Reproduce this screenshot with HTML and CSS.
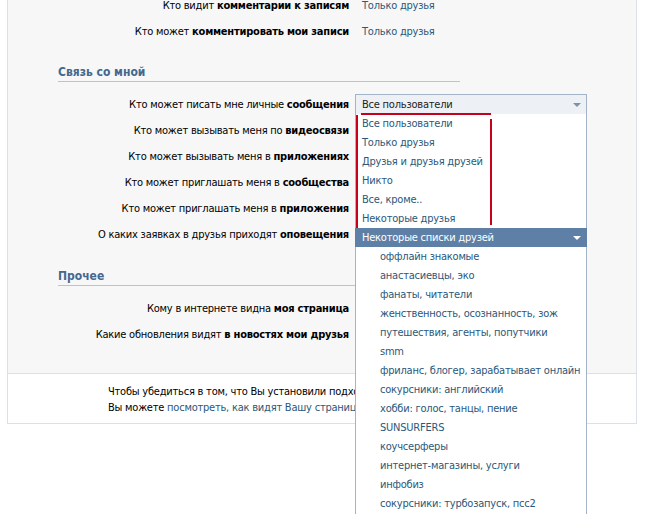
FILE: index.html
```html
<!DOCTYPE html>
<html lang="ru">
<head>
<meta charset="utf-8">
<title>Приватность</title>
<link rel="stylesheet" href="styles.css">
</head>
<body>
<div class="panel">
  <div class="settings">
    <div class="rows">
      <div class="row"><div class="label">Кто видит <b>комментарии к записям</b></div><div class="value">Только друзья</div></div>
      <div class="row"><div class="label">Кто может <b>комментировать мои записи</b></div><div class="value">Только друзья</div></div>
    </div>

    <div class="section">
      <div class="section-title">Связь со мной</div>
      <div class="rows">
        <div class="row">
          <div class="label">Кто может писать мне личные <b>сообщения</b></div>
          <div class="select-wrap">
            <div class="select"><span>Все пользователи</span><span class="arrow"></span></div>
            <div class="dropdown">
              <div class="opt">Все пользователи</div>
              <div class="opt">Только друзья</div>
              <div class="opt">Друзья и друзья друзей</div>
              <div class="opt">Никто</div>
              <div class="opt">Все, кроме..</div>
              <div class="opt">Некоторые друзья</div>
              <div class="opt active"><span>Некоторые списки друзей</span><span class="arrow arrow-white"></span></div>
              <div class="opt sub">оффлайн знакомые</div>
              <div class="opt sub">анастасиевцы, эко</div>
              <div class="opt sub">фанаты, читатели</div>
              <div class="opt sub">женственность, осознанность, зож</div>
              <div class="opt sub">путешествия, агенты, попутчики</div>
              <div class="opt sub">smm</div>
              <div class="opt sub">фриланс, блогер, зарабатывает онлайн</div>
              <div class="opt sub">сокурсники: английский</div>
              <div class="opt sub">хобби: голос, танцы, пение</div>
              <div class="opt sub">SUNSURFERS</div>
              <div class="opt sub">коучсерферы</div>
              <div class="opt sub">интернет-магазины, услуги</div>
              <div class="opt sub">инфобиз</div>
              <div class="opt sub">сокурсники: турбозапуск, псс2</div>
            </div>
            <div class="mark mark-top"></div>
            <div class="mark mark-left"></div>
            <div class="mark mark-right"></div>
          </div>
        </div>
        <div class="row"><div class="label">Кто может вызывать меня по <b>видеосвязи</b></div><div class="value"></div></div>
        <div class="row"><div class="label">Кто может вызывать меня в <b>приложениях</b></div><div class="value"></div></div>
        <div class="row"><div class="label">Кто может приглашать меня в <b>сообщества</b></div><div class="value"></div></div>
        <div class="row"><div class="label">Кто может приглашать меня в <b>приложения</b></div><div class="value"></div></div>
        <div class="row"><div class="label">О каких заявках в друзья приходят <b>оповещения</b></div><div class="value"></div></div>
      </div>
    </div>

    <div class="section section-other">
      <div class="section-title">Прочее</div>
      <div class="rows">
        <div class="row"><div class="label">Кому в интернете видна <b>моя страница</b></div><div class="value"></div></div>
        <div class="row"><div class="label">Какие обновления видят <b>в новостях мои друзья</b></div><div class="value"></div></div>
      </div>
    </div>
  </div>

  <div class="footer">
    <div class="footer-text">Чтобы убедиться в том, что Вы установили подходящие настройки приватности,<br>Вы можете <a href="#" class="link">посмотреть, как видят Вашу страницу другие пользователи</a>.</div>
  </div>
</div>
</body>
</html>
```

FILE: styles.css
```css
* {
  box-sizing: border-box;
}

html,
body {
  margin: 0;
  padding: 0;
  background: #ffffff;
}

body {
  min-height: 560px;
  font-family: "DejaVu Sans Condensed", "DejaVu Sans", Tahoma, sans-serif;
  font-size: 11px;
  letter-spacing: -0.22px;
  color: #000000;
}

.panel {
  margin: -9px 0 0 7px;
  width: 630px;
  border: 1px solid #dae1e8;
  background: #f7f7f7;
}

.settings {
  padding-bottom: 26px;
}

.row {
  display: grid;
  grid-template-columns: 341px 232px;
  column-gap: 6px;
  height: 26px;
  align-items: center;
}

.label {
  text-align: right;
  white-space: nowrap;
}

.value {
  padding-left: 7px;
  color: #2b587a;
}

.section {
  padding-top: 20px;
}

.section-other {
  padding-top: 21px;
}

.section-title {
  margin-left: 50px;
  width: 402px;
  line-height: 16px;
  padding-bottom: 1px;
  border-bottom: 1px solid #b5c4dc;
  color: #45688e;
  font-weight: bold;
  font-size: 12px;
  letter-spacing: 0;
}

.section .rows {
  margin-top: 9px;
}

.select-wrap {
  position: relative;
  height: 20px;
  width: 232px;
}

.select {
  height: 20px;
  border: 1px solid #a3b4c8;
  border-bottom: none;
  background: #edf0f4;
  display: flex;
  align-items: center;
  justify-content: space-between;
  padding: 0 5px 0 6px;
  color: #222222;
}

.arrow {
  width: 0;
  height: 0;
  border-left: 4px solid transparent;
  border-right: 4px solid transparent;
  border-top: 4px solid #7f91a8;
}

.arrow-white {
  border-top-color: #ffffff;
}

.dropdown {
  position: absolute;
  top: 20px;
  left: 0;
  width: 232px;
  background: #ffffff;
  border-left: 1px solid #a3b4c8;
  border-right: 1px solid #a3b4c8;
  padding-bottom: 20px;
  z-index: 2;
}

.opt {
  height: 19px;
  line-height: 19px;
  padding-left: 6px;
  color: #2b587a;
  white-space: nowrap;
}

.opt.sub {
  padding-left: 24px;
}

.opt.active {
  margin: 0 -1px;
  padding: 0 6px 0 7px;
  background: #5f80a6;
  color: #ffffff;
  display: flex;
  align-items: center;
  justify-content: space-between;
}

.mark {
  position: absolute;
  background: #c8001c;
  z-index: 3;
}

.mark-top {
  left: 6px;
  top: 19px;
  width: 130px;
  height: 2px;
}

.mark-left {
  left: 1px;
  top: 21px;
  width: 2px;
  height: 113px;
}

.mark-right {
  left: 135px;
  top: 25px;
  width: 2px;
  height: 106px;
}

.footer {
  border-top: 1px solid #dae1e8;
  background: #ffffff;
  padding: 10px 0 7px 100px;
}

.footer-text {
  line-height: 16px;
  white-space: nowrap;
}

.link {
  color: #2b587a;
  text-decoration: none;
}
```
